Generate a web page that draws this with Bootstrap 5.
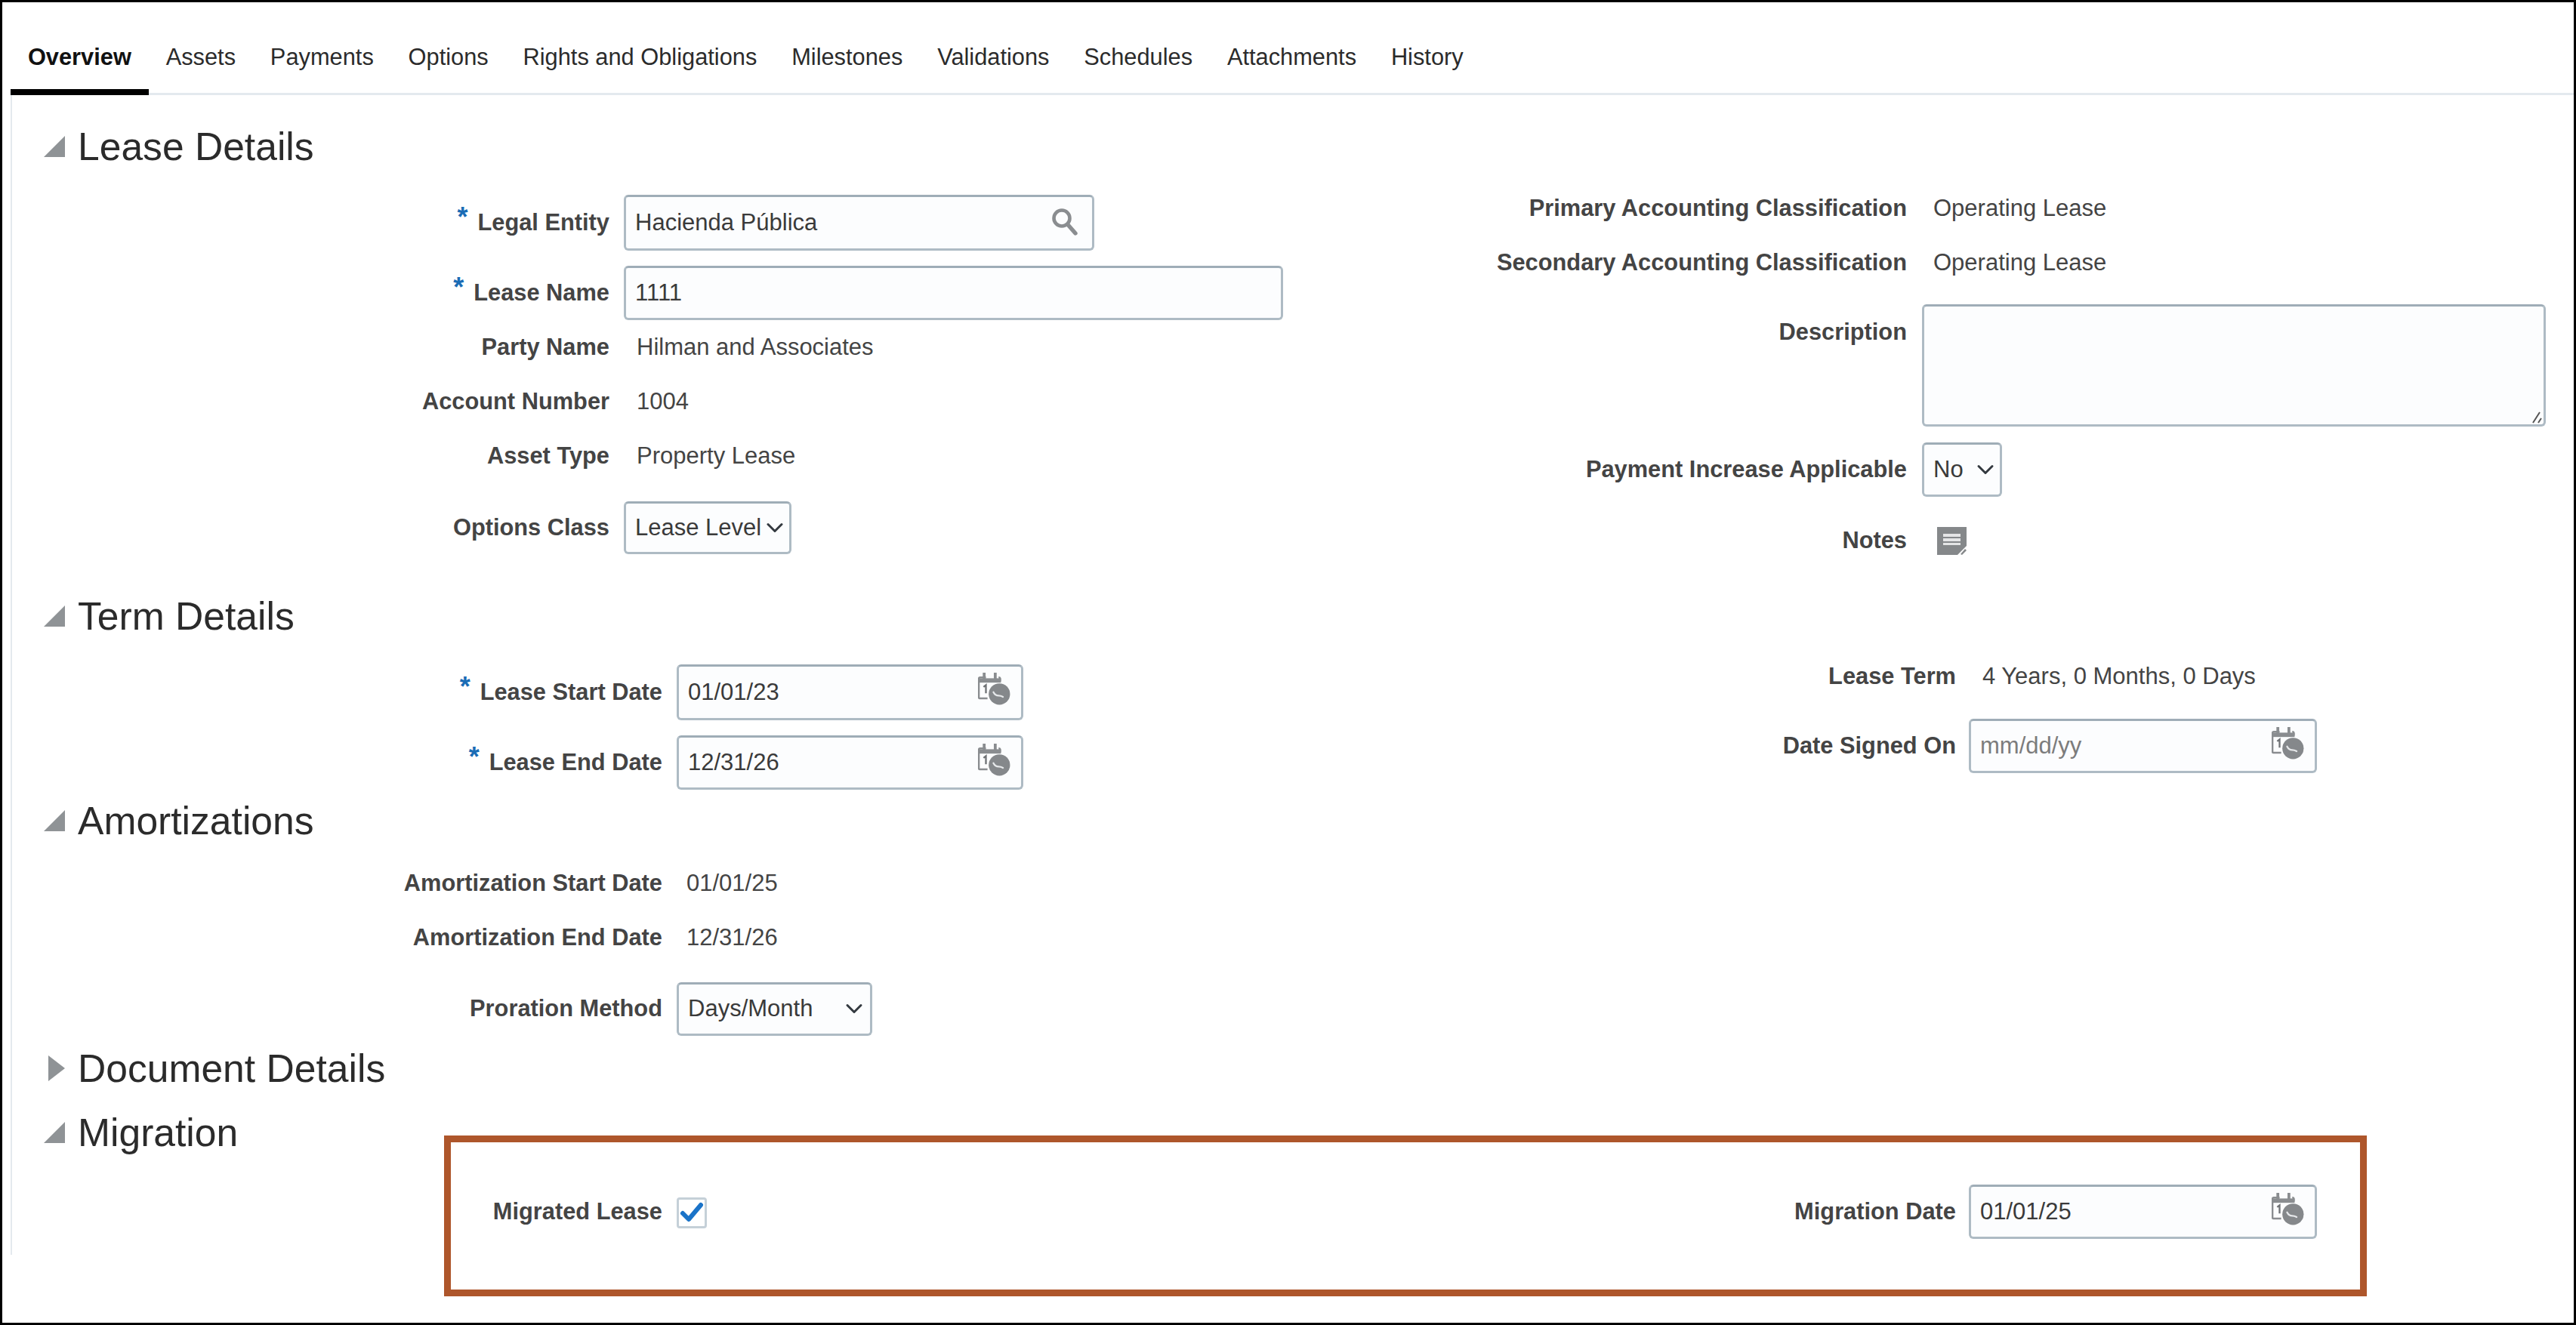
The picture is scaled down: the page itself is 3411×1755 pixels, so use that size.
<!DOCTYPE html>
<html lang="en">
<head>
    <meta charset="UTF-8">
    <meta name="viewport" content="width=device-width, initial-scale=1.0">
    <title>Lease Overview</title>
    <link href="https://cdn.jsdelivr.net/npm/bootstrap@5.3.0/dist/css/bootstrap.min.css" rel="stylesheet">
    <style>
        html, body { height: 100%; overflow: hidden; background: #fff; }
        body { font-family: "Liberation Sans", Arial, sans-serif; color: #333; }
        .shot-frame { position: relative; width: 100vw; height: 100vh; border: 3px solid #000; overflow: hidden; }

        /* tabs */
        .lease-tabs { margin-left: 11px; border-bottom: 3px solid #e4e9ee; flex-wrap: nowrap; }
        .lease-tabs .nav-link {
            font-size: 30.8px; line-height: 36px; color: #2b2b2b; padding: 55px 22.9px 24px;
            border: 0; border-bottom: 8px solid transparent; margin-bottom: -3px; border-radius: 0; background: none;
        }
        .lease-tabs .nav-link.active { color: #111; font-weight: 700; border-bottom-color: #000; }

        /* panel */
        .lease-panel { margin-left: 11px; height: 1536px; border-left: 2px solid #e4e9ee; padding-top: 38px; }
        .sec-head { display: flex; align-items: center; height: 60px; padding-left: 42px; gap: 17px; }
        .sec-head h2 { font-size: 51.6px; line-height: 60px; font-weight: 400; color: #2b2b2b; margin: 0; }
        .sec-head svg { flex: none; display: block; }
        .tri-shift { margin-left: 6px; }
        .sec-body { display: flex; }
        .col-left { width: 1684px; flex: none; }
        .col-right { flex: 1; }

        .frow { display: flex; align-items: center; min-height: 72px; }
        .frow-top { align-items: flex-start; }
        .flabel { flex: none; text-align: right; font-weight: 700; font-size: 30.8px; line-height: 36px; color: #444; }
        .col-left .flabel { width: var(--lab-l); margin-right: 19px; }
        .col-right .flabel { width: var(--lab-r); margin-right: var(--gap-r); }
        .req { color: #1a6cb5; font-size: 36px; line-height: 20px; vertical-align: 5px; margin-right: 13px; }
        .fvalue { font-size: 31px; line-height: 36px; color: #444; padding-left: var(--val-pad, 18px); }

        .body-lease { --lab-l: 791px; --lab-r: 825px; --gap-r: 20px; --val-pad: 17px; padding-bottom: 34px; }
        .body-lease .col-right { --val-pad: 15px; }
        .body-term { --lab-l: 861px; --lab-r: 890px; --gap-r: 17px; padding-bottom: 11px; }
        .body-amort { --lab-l: 861px; --lab-r: 890px; --gap-r: 18px; --val-pad: 13px; padding-bottom: 13px; }
        .body-migr { --lab-l: 861px; --lab-r: 890px; --gap-r: 17px; }

        /* inputs */
        .field-box { position: relative; flex: none; }
        .lease-input, .lease-select {
            font-size: 31px; line-height: 36px; color: #3a3a3a; background-color: #fcfdfe; height: 100%;
            border: 3px solid #aebbc4; border-top-color: #9fadb7; border-radius: 6px; padding: 0 12px; box-shadow: none;
        }
        .lease-input::placeholder { color: #7c7c7c; opacity: 1; }
        .lease-select { height: auto; background-size: 32px 24px; background-position: right 3px center; padding: 0 36px 0 12px; }
        .w-entity { width: 623px; height: 74px; }
        .w-name { width: 873px; height: 72px; }
        .w-date { width: 459px; height: 74px; }
        .w-date2 { width: 459px; height: 72px; }
        .w-date3 { width: 461px; height: 72px; }
        .w-desc { width: 826px; height: 162px; }
        .sel-class { width: 222px; height: 70px; }
        .sel-no { width: 106px; height: 72px; }
        .sel-prorate { width: 259px; height: 71px; background-position: right 5px center; }
        .field-icon { position: absolute; display: block; }
        .ico-search { right: 21px; top: 17px; }
        .ico-cal { right: 17px; top: 10px; }
        .ico-grip { position: absolute; right: 4px; bottom: 4px; }
        .note-ico { display: block; margin-left: 20px; }

        .lease-check {
            width: 40px; height: 41px; margin: 3px 0 0; flex: none; border: 3px solid #c5d0d8 !important; border-radius: 5px;
            background-color: #fff !important; box-shadow: none !important;
            background-size: 34px 35px;
            background-image: url("data:image/svg+xml,%3Csvg xmlns='http://www.w3.org/2000/svg' viewBox='0 0 34 35'%3E%3Cpath d='M5 18l8 8L29 7' fill='none' stroke='%231a73c8' stroke-width='6' stroke-linecap='round' stroke-linejoin='round'/%3E%3C/svg%3E") !important;
        }

        .pad-34 { padding-top: 34px; } .pad-16 { padding-top: 16px; } .pad-14 { padding-top: 14px; }
        .pad-17 { padding-top: 17px; } .pad-39 { padding-top: 39px; }
        .gap-20 { margin-top: 20px; } .gap-19 { margin-top: 19px; } .gap-21 { margin-top: 21px; }
        .gap-22 { margin-top: 22px; } .gap-23 { margin-top: 23px; } .gap-25 { margin-top: 25px; }
        .desc-label { padding-top: 19px; }

        /* annotation over the screenshot */
        .callout-box { position: absolute; left: 585px; top: 1501px; width: 2546px; height: 213px; border: 9px solid #ae562b; pointer-events: none; }
    </style>
</head>
<body>
    <svg width="0" height="0" class="position-absolute">
        <symbol id="tri-open" viewBox="0 0 28 28"><path d="M0 28L28 0v28z" fill="#8f9396"/></symbol>
        <symbol id="tri-closed" viewBox="0 0 22 34"><path d="M0 0l22 17L0 34z" fill="#8f9396"/></symbol>
        <symbol id="cal-clock" viewBox="1 0 41 42">
            <path d="M11 7H3.5a1.5 1.5 0 0 0-1.5 1.5V32a1.5 1.5 0 0 0 1.5 1.5H13M27 7a2 2 0 0 1 2 2v3" fill="none" stroke="#8a8d90" stroke-width="2.4"/>
            <path d="M2 8h28v5.5H2z" fill="#8a8d90"/>
            <path d="M7 1h3.6v8H7zM21 1h3.6v8H21z" fill="#8a8d90"/>
            <path d="M8 19l3-2.4V27" fill="none" stroke="#6f7275" stroke-width="2.2"/>
            <circle cx="28" cy="28" r="13.5" fill="#85888b"/>
            <path d="M20.5 25.5c1.5 3 4 4.5 6.5 4.5 2 0 3.8.6 5.5 1.5" fill="none" stroke="#e6e8ea" stroke-width="2.2" stroke-linecap="round"/>
        </symbol>
    </svg>

    <div class="shot-frame">
        <ul class="nav nav-tabs lease-tabs">
            <li class="nav-item"><a class="nav-link active" href="#">Overview</a></li>
            <li class="nav-item"><a class="nav-link" href="#">Assets</a></li>
            <li class="nav-item"><a class="nav-link" href="#">Payments</a></li>
            <li class="nav-item"><a class="nav-link" href="#">Options</a></li>
            <li class="nav-item"><a class="nav-link" href="#">Rights and Obligations</a></li>
            <li class="nav-item"><a class="nav-link" href="#">Milestones</a></li>
            <li class="nav-item"><a class="nav-link" href="#">Validations</a></li>
            <li class="nav-item"><a class="nav-link" href="#">Schedules</a></li>
            <li class="nav-item"><a class="nav-link" href="#">Attachments</a></li>
            <li class="nav-item"><a class="nav-link" href="#">History</a></li>
        </ul>

        <div class="lease-panel">
            <!-- Lease Details -->
            <div class="sec-head">
                <svg width="28" height="28"><use href="#tri-open"/></svg>
                <h2>Lease Details</h2>
            </div>
            <div class="sec-body body-lease">
                <div class="col-left pad-34">
                    <div class="frow">
                        <div class="flabel"><span class="req">*</span>Legal Entity</div>
                        <div class="field-box w-entity">
                            <input class="form-control lease-input" type="text" value="Hacienda Pública" readonly>
                            <svg class="field-icon ico-search" width="36" height="38" viewBox="0 0 36 38">
                                <circle cx="14" cy="14" r="10.5" fill="none" stroke="#8a8d90" stroke-width="4.6"/>
                                <path d="M21.5 22L32 34" stroke="#8a8d90" stroke-width="5.4" stroke-linecap="round"/>
                            </svg>
                        </div>
                    </div>
                    <div class="frow gap-20">
                        <div class="flabel"><span class="req">*</span>Lease Name</div>
                        <div class="field-box w-name"><input class="form-control lease-input" type="text" value="1111" readonly></div>
                    </div>
                    <div class="frow"><div class="flabel">Party Name</div><div class="fvalue">Hilman and Associates</div></div>
                    <div class="frow"><div class="flabel">Account Number</div><div class="fvalue">1004</div></div>
                    <div class="frow"><div class="flabel">Asset Type</div><div class="fvalue">Property Lease</div></div>
                    <div class="frow gap-23">
                        <div class="flabel">Options Class</div>
                        <select class="form-select lease-select sel-class"><option>Lease Level</option></select>
                    </div>
                </div>
                <div class="col-right pad-16">
                    <div class="frow"><div class="flabel">Primary Accounting Classification</div><div class="fvalue">Operating Lease</div></div>
                    <div class="frow"><div class="flabel">Secondary Accounting Classification</div><div class="fvalue">Operating Lease</div></div>
                    <div class="frow frow-top gap-19">
                        <div class="flabel desc-label">Description</div>
                        <div class="field-box w-desc">
                            <textarea class="form-control lease-input" rows="3" style="resize:none"></textarea>
                            <svg class="ico-grip" width="14" height="16" viewBox="0 0 14 16">
                                <path d="M1 15L10 1M8 15l4-6" stroke="#555" stroke-width="2" fill="none"/>
                            </svg>
                        </div>
                    </div>
                    <div class="frow gap-21">
                        <div class="flabel">Payment Increase Applicable</div>
                        <select class="form-select lease-select sel-no"><option>No</option></select>
                    </div>
                    <div class="frow gap-22">
                        <div class="flabel">Notes</div>
                        <svg class="note-ico" width="39" height="37" viewBox="0 0 39 37">
                            <path d="M0 0h39v25L27 37H0z" fill="#85888a"/>
                            <path d="M8 9h23v4H8zM8 15h23v4H8zM8 21h23v3H8z" fill="#e4e5e6"/>
                            <path d="M31 36l6-7 2 2-6 6z" fill="#85888a"/>
                        </svg>
                    </div>
                </div>
            </div>

            <!-- Term Details -->
            <div class="sec-head">
                <svg width="28" height="28"><use href="#tri-open"/></svg>
                <h2>Term Details</h2>
            </div>
            <div class="sec-body body-term">
                <div class="col-left pad-34">
                    <div class="frow">
                        <div class="flabel"><span class="req">*</span>Lease Start Date</div>
                        <div class="field-box w-date">
                            <input class="form-control lease-input" type="text" value="01/01/23" readonly>
                            <svg class="field-icon ico-cal" width="43" height="44"><use href="#cal-clock"/></svg>
                        </div>
                    </div>
                    <div class="frow gap-20">
                        <div class="flabel"><span class="req">*</span>Lease End Date</div>
                        <div class="field-box w-date2">
                            <input class="form-control lease-input" type="text" value="12/31/26" readonly>
                            <svg class="field-icon ico-cal" width="43" height="44"><use href="#cal-clock"/></svg>
                        </div>
                    </div>
                </div>
                <div class="col-right pad-14">
                    <div class="frow"><div class="flabel">Lease Term</div><div class="fvalue">4 Years, 0 Months, 0 Days</div></div>
                    <div class="frow gap-20">
                        <div class="flabel">Date Signed On</div>
                        <div class="field-box w-date3">
                            <input class="form-control lease-input" type="text" placeholder="mm/dd/yy" readonly>
                            <svg class="field-icon ico-cal" width="43" height="44"><use href="#cal-clock"/></svg>
                        </div>
                    </div>
                </div>
            </div>

            <!-- Amortizations -->
            <div class="sec-head">
                <svg width="28" height="28"><use href="#tri-open"/></svg>
                <h2>Amortizations</h2>
            </div>
            <div class="sec-body body-amort">
                <div class="col-left pad-17">
                    <div class="frow"><div class="flabel">Amortization Start Date</div><div class="fvalue">01/01/25</div></div>
                    <div class="frow"><div class="flabel">Amortization End Date</div><div class="fvalue">12/31/26</div></div>
                    <div class="frow gap-22">
                        <div class="flabel">Proration Method</div>
                        <select class="form-select lease-select sel-prorate"><option>Days/Month</option></select>
                    </div>
                </div>
            </div>

            <!-- Document Details -->
            <div class="sec-head">
                <svg class="tri-shift" width="22" height="34"><use href="#tri-closed"/></svg>
                <h2>Document Details</h2>
            </div>

            <!-- Migration -->
            <div class="sec-head gap-25">
                <svg width="28" height="28"><use href="#tri-open"/></svg>
                <h2>Migration</h2>
            </div>
            <div class="sec-body body-migr">
                <div class="col-left pad-39">
                    <div class="frow">
                        <div class="flabel">Migrated Lease</div>
                        <input class="form-check-input lease-check" type="checkbox" checked>
                    </div>
                </div>
                <div class="col-right pad-39">
                    <div class="frow">
                        <div class="flabel">Migration Date</div>
                        <div class="field-box w-date3">
                            <input class="form-control lease-input" type="text" value="01/01/25" readonly>
                            <svg class="field-icon ico-cal" width="43" height="44"><use href="#cal-clock"/></svg>
                        </div>
                    </div>
                </div>
            </div>
        </div>

        <div class="callout-box"></div>
    </div>

    <script src="https://cdn.jsdelivr.net/npm/bootstrap@5.3.0/dist/js/bootstrap.bundle.min.js"></script>
</body>
</html>
